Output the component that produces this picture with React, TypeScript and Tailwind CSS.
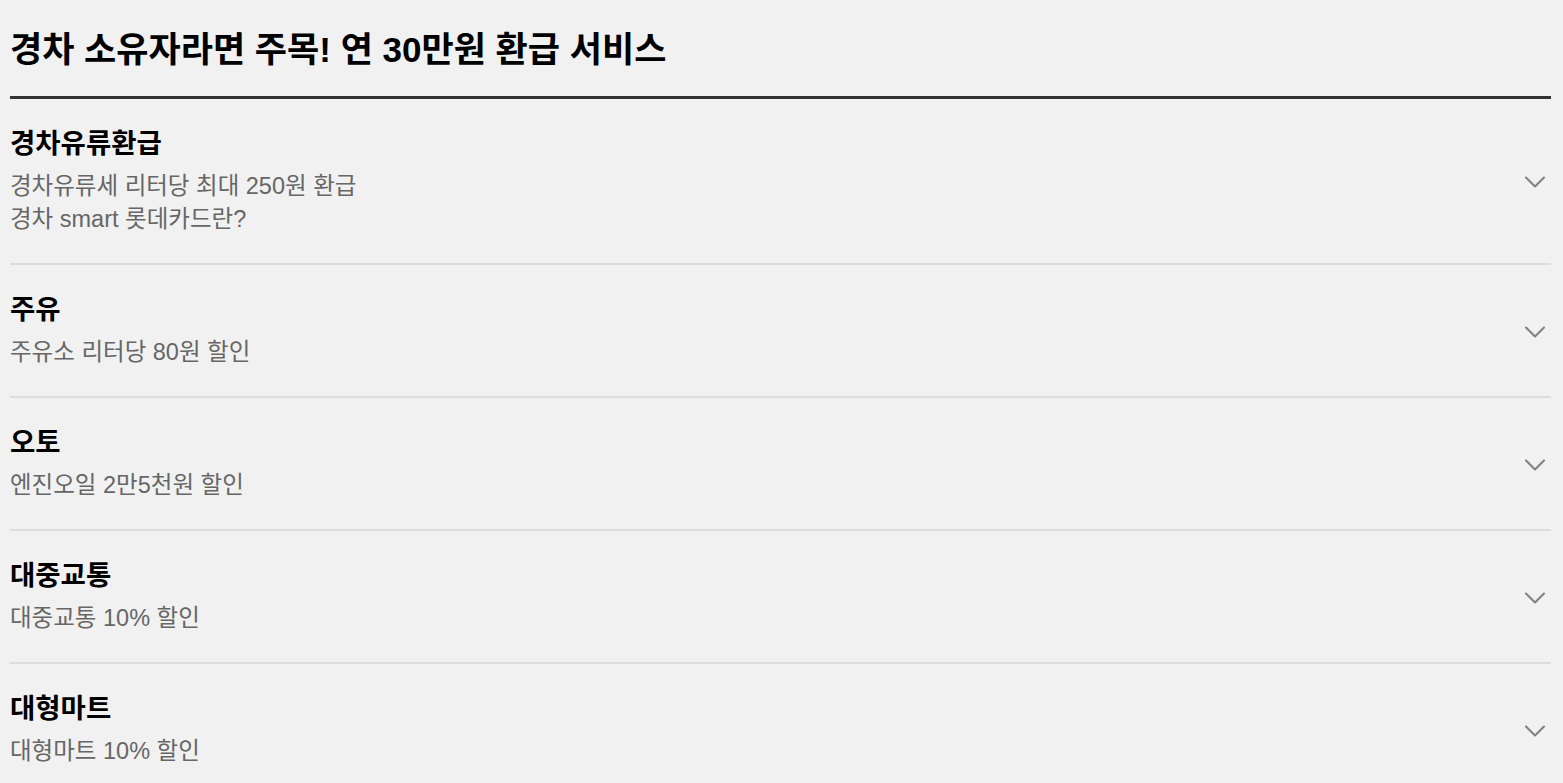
import { ChevronDown } from "lucide-react"

type Benefit = {
  title: string
  lines: string[]
}

const benefits: Benefit[] = [
  { title: "경차유류환급", lines: ["경차유류세 리터당 최대 250원 환급", "경차 smart 롯데카드란?"] },
  { title: "주유", lines: ["주유소 리터당 80원 할인"] },
  { title: "오토", lines: ["엔진오일 2만5천원 할인"] },
  { title: "대중교통", lines: ["대중교통 10% 할인"] },
  { title: "대형마트", lines: ["대형마트 10% 할인"] },
]

export default function App() {
  return (
    <div
      className="min-h-screen bg-[#f1f1f1] pl-[10px] pr-[12px]"
      style={{ fontFamily: '"Liberation Sans", "Noto Sans CJK KR", sans-serif' }}
    >
      <h1 className="pt-[28px] pb-[24px] text-[35px] leading-[44px] font-bold text-black border-b-[3px] border-[#333]">
        경차 소유자라면 주목! 연 30만원 환급 서비스
      </h1>
      <ul>
        {benefits.map((b) => (
          <li
            key={b.title}
            className="flex items-center justify-between border-b-2 border-[#dcdddf] pt-[29px] pb-[27px]"
          >
            <div>
              <div className="text-[27.5px] leading-[32px] font-bold text-black">{b.title}</div>
              <div className="mt-[10px] text-[23.5px] leading-[33px] text-[#666]">
                {b.lines.map((l) => (
                  <p key={l}>{l}</p>
                ))}
              </div>
            </div>
            <ChevronDown className="-mr-[2px] h-9 w-9 text-[#808080]" strokeWidth={1.4} />
          </li>
        ))}
      </ul>
    </div>
  )
}
